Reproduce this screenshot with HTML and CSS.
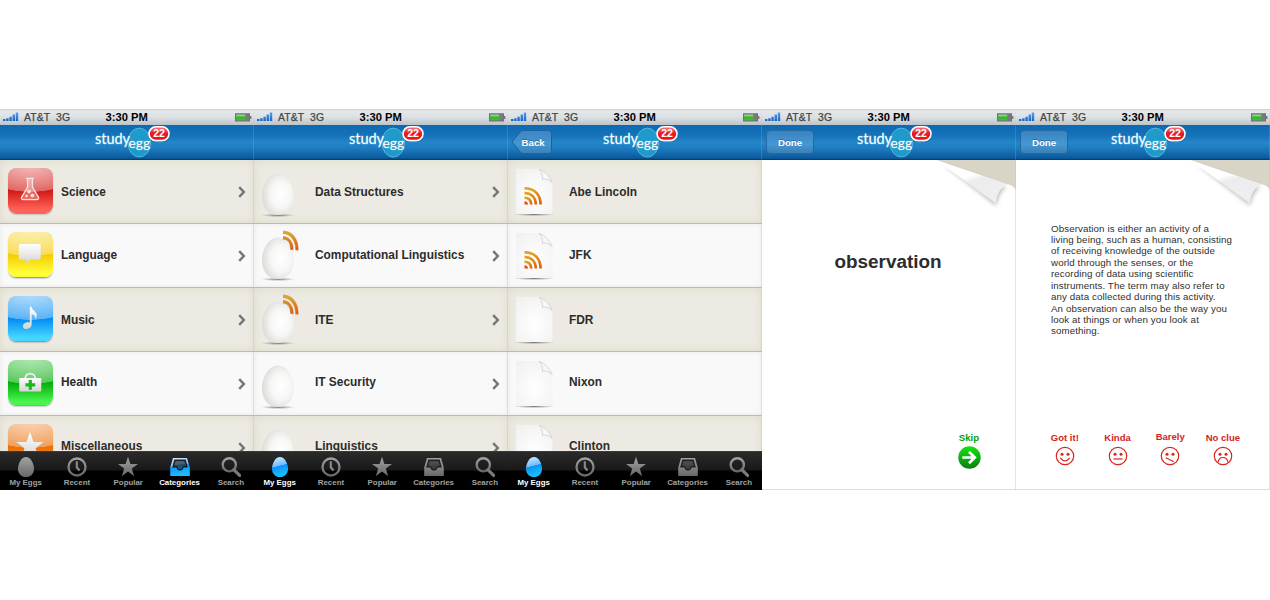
FILE: index.html
```html
<!DOCTYPE html>
<html lang="en">
<head>
<meta charset="utf-8">
<title>StudyEgg</title>
<link rel="stylesheet" href="styles.css">
</head>
<body>
<svg class="defs" width="80" height="34" aria-hidden="true">
  <defs>
    <linearGradient id="g-bar" x1="0" x2="0" y1="0" y2="1"><stop offset="0" stop-color="#58a0ee"/><stop offset="1" stop-color="#1463c8"/></linearGradient>
    <linearGradient id="g-batt" x1="0" x2="0" y1="0" y2="1"><stop offset="0" stop-color="#a5e59a"/><stop offset=".5" stop-color="#35b52b"/><stop offset="1" stop-color="#43c02f"/></linearGradient>
    <linearGradient id="g-badge" x1="0" x2="0" y1="0" y2="1"><stop offset="0" stop-color="#f4808a"/><stop offset=".5" stop-color="#e41826"/><stop offset="1" stop-color="#f0101c"/></linearGradient>
    <linearGradient id="g-gray" x1="0" x2="0" y1="0" y2="1"><stop offset="0" stop-color="#a2a2a2"/><stop offset="1" stop-color="#686868"/></linearGradient>
    <linearGradient id="g-blue" x1="0" x2=".2" y1="0" y2="1"><stop offset="0" stop-color="#d8efff"/><stop offset=".5" stop-color="#6dbcff"/><stop offset=".52" stop-color="#0d92f8"/><stop offset="1" stop-color="#16c0ff"/></linearGradient>
    <linearGradient id="g-white" x1="0" x2="0" y1="0" y2="1"><stop offset="0" stop-color="#fff"/><stop offset="1" stop-color="#d4d4d4"/></linearGradient>
    <linearGradient id="g-rss" x1="0" x2="0" y1="0" y2="1"><stop offset="0" stop-color="#e2a420"/><stop offset="1" stop-color="#e2560f"/></linearGradient>
    <radialGradient id="g-egg" cx=".6" cy=".5" r=".66"><stop offset="0" stop-color="#fff"/><stop offset=".5" stop-color="#f6f6f5"/><stop offset="1" stop-color="#d6d5d2"/></radialGradient>
    <radialGradient id="g-shadow"><stop offset="0" stop-color="#555" stop-opacity=".75"/><stop offset="1" stop-color="#777" stop-opacity="0"/></radialGradient>
    <radialGradient id="g-doc" cx=".5" cy=".6" r=".7"><stop offset="0" stop-color="#fff"/><stop offset="1" stop-color="#f1f1f1"/></radialGradient>
    <linearGradient id="g-flap" x1=".4" y1=".4" x2=".6" y2=".8"><stop offset="0" stop-color="#fff"/><stop offset=".3" stop-color="#ececee"/><stop offset="1" stop-color="#eeeeef"/></linearGradient>
    <linearGradient id="g-go" x1="0" x2="0" y1="0" y2="1"><stop offset="0" stop-color="#12e50e"/><stop offset="1" stop-color="#0a7d12"/></linearGradient>
    <linearGradient id="g-btn" x1="0" x2="0" y1="0" y2="1"><stop offset="0" stop-color="#3d86c2"/><stop offset=".6" stop-color="#4496d1"/><stop offset="1" stop-color="#3c7fb5"/></linearGradient>
    <filter id="blur2" x="-20%" y="-20%" width="140%" height="150%"><feGaussianBlur stdDeviation="2"/></filter>
  </defs>

  <symbol id="signal" viewBox="0 0 16 9"><path fill="url(#g-bar)" d="M0 7h2.4v2H0zM3.2 6.2h2.4V9H3.2zM6.4 4.8h2.4V9H6.4zM9.6 2.6H12V9H9.6zM12.8.5h2.4V9h-2.4z"/></symbol>
  <symbol id="battery" viewBox="0 0 17 9"><rect x=".5" y=".8" width="14" height="7.2" fill="#777b7e" stroke="#6d7276"/><rect x="1.2" y="1.6" width="9" height="5.7" fill="url(#g-batt)"/><path d="M15 3h1.4v3H15z" fill="#777"/></symbol>
  <symbol id="logo" viewBox="0 0 80 34">
    <ellipse cx="46.3" cy="17.600" rx="11.400" ry="14.500" fill="#1f9bcb" stroke="#62bfe2" stroke-width=".8"/>
    <text class="logo-text" x="2" y="19.400" font-size="15.500" textLength="35" lengthAdjust="spacingAndGlyphs">study</text>
    <text class="logo-text" x="35.600" y="23.400" font-size="14" textLength="21.500" lengthAdjust="spacingAndGlyphs">egg</text>
    <rect x="55.500" y="3" width="21" height="14" rx="7" fill="#06365f" opacity=".6"/>
    <rect x="56" y="1.800" width="20" height="13.800" rx="6.900" fill="url(#g-badge)" stroke="#fff" stroke-width="1.600"/>
    <text class="badge-text" x="66" y="12.400">22</text>
  </symbol>
  <symbol id="chevron" viewBox="0 0 8 12"><path d="M1.2 1.2 5.8 6l-4.600 4.800" fill="none" stroke="#767676" stroke-width="2.500"/></symbol>

  <symbol id="t-egg" viewBox="0 0 20 22"><path d="M10 1c4.600 0 8 6.500 8 11.700 0 5-3.300 8.300-8 8.300s-8-3.300-8-8.300C2 7.500 5.400 1 10 1z"/></symbol>
  <symbol id="t-recent" viewBox="0 0 20 22"><circle cx="10" cy="11" r="8.500" fill="none" stroke="url(#g-gray)" stroke-width="2.300"/><path d="M9.800 5.300v6l2.700 3.200" fill="none" stroke="#8c8c8c" stroke-width="2.100"/></symbol>
  <symbol id="t-star" viewBox="0 0 20 22"><path d="m10 .8 2.400 7.300H20l-6.200 4.500 2.400 7.600L10 15.600l-6.200 4.600 2.400-7.600L0 8.100h7.600z"/></symbol>
  <symbol id="t-box" viewBox="0 0 20 22"><path fill-rule="evenodd" d="M3 2h14l2.800 9.500V20H.2v-8.500zm1.300 1.600L2.200 11.500h4.300c.3 2 1.500 3 3.500 3s3.200-1 3.500-3h4.300l-2.100-7.900z"/><path d="M5.500 5.200h9L16 10h-3l-1.300 3H8.300L7 10H4z" opacity=".38"/></symbol>
  <symbol id="t-search" viewBox="0 0 20 22"><circle cx="8.300" cy="8.800" r="6.600" fill="none" stroke="url(#g-gray)" stroke-width="2.400"/><path d="m13 13.800 5.600 5.600" stroke="#7b7b7b" stroke-width="3.200" stroke-linecap="round"/></symbol>

  <symbol id="i-flask" viewBox="0 0 46 46"><path d="M18.500 10.500h8M20 11v8.500l-6 10.200c-.8 1.500 0 2.600 1.500 2.600h14c1.500 0 2.300-1.100 1.500-2.600l-6-10.200V11" fill="#fff" fill-opacity=".28" stroke="#f4e4e4" stroke-width="1.300"/><circle cx="21.500" cy="24" r="2" fill="#f7dcdc"/><circle cx="25" cy="28" r="2" fill="#f7dcdc"/><circle cx="19" cy="28.500" r="1.300" fill="#f7dcdc"/></symbol>
  <symbol id="i-bubble" viewBox="0 0 46 46"><path fill="url(#g-white)" d="M13 12.300h18.500q2 0 2 2V26q0 2-2 2H23l-4.500 4.200V28H13q-2 0-2-2V14.300q0-2 2-2z"/></symbol>
  <symbol id="i-note" viewBox="0 0 46 46"><path fill="url(#g-white)" d="M22.300 11h1.700c.4 3.200 5.300 5 5.400 8.700 0 1.700-.6 3-1.500 4.200.5-3-1-5-3.700-5.300V29c0 3-2.500 4.800-5.300 4.800-2.200 0-3.600-1.200-3.600-3 0-2.500 3-4.500 7-3.800z"/></symbol>
  <symbol id="i-kit" viewBox="0 0 46 46"><path d="M17.500 19.500c0-7.500 10.500-7.500 10.500 0" fill="none" stroke="#f2f2f2" stroke-width="1.800"/><rect x="11.500" y="18.300" width="22.500" height="14" rx="1" fill="url(#g-white)"/><path fill="#16b81c" d="M21.200 20.500h3.200v3.300h3.400V27h-3.400v3.300h-3.200V27h-3.400v-3.200h3.400z"/></symbol>
  <symbol id="i-star" viewBox="0 0 46 46"><path fill="url(#g-white)" d="m22.500 8 3.600 10.500h10.400l-8.300 6.200 3.300 10.200-9-6.200-9 6.200 3.300-10.200L8.500 18.500h10.400z"/></symbol>

  <symbol id="egg" viewBox="0 0 46 52"><ellipse cx="20" cy="47.300" rx="17" ry="1.800" fill="url(#g-shadow)"/><path fill="url(#g-egg)" d="M19.800 5.500C29.500 5.500 35.700 18 35.700 28c0 12-6.700 19-15.900 19S4 40 4 28C4 18 10.100 5.500 19.800 5.500z"/></symbol>
  <symbol id="waves" viewBox="0 0 20 22"><path d="M2 2.300C10.500 2.600 16 9.500 16 20.300M2 7.800c5.500.3 9 5 9 12" fill="none" stroke="#9a6a30" stroke-opacity=".5" stroke-width="3.400"/><path d="M2 2.300C10.500 2.600 16 9.500 16 20.300M2 7.800c5.500.3 9 5 9 12" fill="none" stroke="url(#g-rss)" stroke-width="2.500"/></symbol>
  <symbol id="doc" viewBox="0 0 44 52"><ellipse cx="21" cy="47.500" rx="21" ry="1.600" fill="url(#g-shadow)"/><path fill="url(#g-doc)" d="M3 2h22q8 1 14.500 14v31H3z"/><path fill="#f7f7f7" stroke="#c9c9c9" stroke-width=".7" d="M26 2.500c3 2 3.500 5 3.500 10 4-1 7 0 9.600 3C36 8.500 32 4 26 2.500z"/></symbol>
  <symbol id="rss" viewBox="0 0 20 20"><g fill="none" stroke="url(#g-rss)" stroke-width="2.600"><path d="M1.500 2.200C11.500 2.200 17.600 8.500 17.600 18.600"/><path d="M1.500 7c7 0 11.300 4.300 11.300 11.600"/><path d="M1.500 11.700c4.200 0 6.700 2.500 6.700 6.900"/></g><path d="M1.500 15.200q3.400.2 3.600 3.400H1.500z" fill="#dc520e"/></symbol>

  <symbol id="curl" viewBox="0 0 86 56">
    <path fill="#d9d5c6" d="M6 0H86V30q-3-5-8-5.500z"/>
    <path fill="#777" opacity=".5" filter="url(#blur2)" d="M14 5 66 45.500q2-12 10-18.500L60 22z"/>
    <path fill="url(#g-flap)" d="M6 0 78 24.500Q67.500 28 65.700 43.300z"/>
  </symbol>
  <symbol id="go" viewBox="0 0 23 23"><circle cx="11.500" cy="11.500" r="11.200" fill="url(#g-go)"/><path d="M4.300 11.500h12M11 5.700l5.800 5.800-5.800 5.800" fill="none" stroke="#fff" stroke-width="2.700"/></symbol>
  <symbol id="face" viewBox="0 0 20 20"><circle cx="10" cy="10" r="8.700" fill="none" stroke="#d8251d" stroke-width="1.200"/><circle cx="7" cy="8.300" r="1.500" fill="#d8251d"/><circle cx="13" cy="8.300" r="1.500" fill="#d8251d"/></symbol>
</svg>

<main class="board">
  <section class="phone">
    <div class="status"><svg class="signal"><use href="#signal"/></svg><span class="carrier">AT&amp;T</span><span class="network">3G</span><b class="time">3:30 PM</b><svg class="battery"><use href="#battery"/></svg></div>
    <header class="nav"><svg class="logo"><use href="#logo"/></svg></header>
    <ul class="list">
      <li class="row"><span class="tile red"><svg><use href="#i-flask"/></svg></span><span class="label">Science</span><svg class="chevron"><use href="#chevron"/></svg></li>
      <li class="row"><span class="tile yellow"><svg><use href="#i-bubble"/></svg></span><span class="label">Language</span><svg class="chevron"><use href="#chevron"/></svg></li>
      <li class="row"><span class="tile blue"><svg><use href="#i-note"/></svg></span><span class="label">Music</span><svg class="chevron"><use href="#chevron"/></svg></li>
      <li class="row"><span class="tile green"><svg><use href="#i-kit"/></svg></span><span class="label">Health</span><svg class="chevron"><use href="#chevron"/></svg></li>
      <li class="row"><span class="tile orange"><svg><use href="#i-star"/></svg></span><span class="label">Miscellaneous</span><svg class="chevron"><use href="#chevron"/></svg></li>
    </ul>
    <nav class="tabs">
      <a class="tab"><svg><use href="#t-egg"/></svg>My Eggs</a>
      <a class="tab"><svg><use href="#t-recent"/></svg>Recent</a>
      <a class="tab"><svg><use href="#t-star"/></svg>Popular</a>
      <a class="tab active"><svg><use href="#t-box"/></svg>Categories</a>
      <a class="tab"><svg><use href="#t-search"/></svg>Search</a>
    </nav>
  </section>

  <section class="phone">
    <div class="status"><svg class="signal"><use href="#signal"/></svg><span class="carrier">AT&amp;T</span><span class="network">3G</span><b class="time">3:30 PM</b><svg class="battery"><use href="#battery"/></svg></div>
    <header class="nav"><svg class="logo"><use href="#logo"/></svg></header>
    <ul class="list">
      <li class="row"><span class="pic"><svg class="egg"><use href="#egg"/></svg></span><span class="label">Data Structures</span><svg class="chevron"><use href="#chevron"/></svg></li>
      <li class="row"><span class="pic"><svg class="egg"><use href="#egg"/></svg><svg class="waves"><use href="#waves"/></svg></span><span class="label">Computational Linguistics</span><svg class="chevron"><use href="#chevron"/></svg></li>
      <li class="row"><span class="pic"><svg class="egg"><use href="#egg"/></svg><svg class="waves"><use href="#waves"/></svg></span><span class="label">ITE</span><svg class="chevron"><use href="#chevron"/></svg></li>
      <li class="row"><span class="pic"><svg class="egg"><use href="#egg"/></svg></span><span class="label">IT Security</span><svg class="chevron"><use href="#chevron"/></svg></li>
      <li class="row"><span class="pic"><svg class="egg"><use href="#egg"/></svg></span><span class="label">Linguistics</span><svg class="chevron"><use href="#chevron"/></svg></li>
    </ul>
    <nav class="tabs">
      <a class="tab active"><svg><use href="#t-egg"/></svg>My Eggs</a>
      <a class="tab"><svg><use href="#t-recent"/></svg>Recent</a>
      <a class="tab"><svg><use href="#t-star"/></svg>Popular</a>
      <a class="tab"><svg><use href="#t-box"/></svg>Categories</a>
      <a class="tab"><svg><use href="#t-search"/></svg>Search</a>
    </nav>
  </section>

  <section class="phone">
    <div class="status"><svg class="signal"><use href="#signal"/></svg><span class="carrier">AT&amp;T</span><span class="network">3G</span><b class="time">3:30 PM</b><svg class="battery"><use href="#battery"/></svg></div>
    <header class="nav">
      <a class="back"><svg viewBox="0 0 42 26"><path d="M1 13 9 3.200Q10.200 1.500 12 1.500H37.500Q40.500 1.500 40.500 4.500V21.500Q40.500 24.500 37.500 24.500H12Q10.200 24.500 9 22.800z" fill="url(#g-btn)" stroke="#1c62a0"/></svg><span>Back</span></a>
      <svg class="logo"><use href="#logo"/></svg>
    </header>
    <ul class="list">
      <li class="row"><span class="pic"><svg class="doc"><use href="#doc"/></svg><svg class="rss"><use href="#rss"/></svg></span><span class="label">Abe Lincoln</span></li>
      <li class="row"><span class="pic"><svg class="doc"><use href="#doc"/></svg><svg class="rss"><use href="#rss"/></svg></span><span class="label">JFK</span></li>
      <li class="row"><span class="pic"><svg class="doc"><use href="#doc"/></svg></span><span class="label">FDR</span></li>
      <li class="row"><span class="pic"><svg class="doc"><use href="#doc"/></svg></span><span class="label">Nixon</span></li>
      <li class="row"><span class="pic"><svg class="doc"><use href="#doc"/></svg></span><span class="label">Clinton</span></li>
    </ul>
    <nav class="tabs">
      <a class="tab active"><svg><use href="#t-egg"/></svg>My Eggs</a>
      <a class="tab"><svg><use href="#t-recent"/></svg>Recent</a>
      <a class="tab"><svg><use href="#t-star"/></svg>Popular</a>
      <a class="tab"><svg><use href="#t-box"/></svg>Categories</a>
      <a class="tab"><svg><use href="#t-search"/></svg>Search</a>
    </nav>
  </section>

  <section class="phone card">
    <div class="status"><svg class="signal"><use href="#signal"/></svg><span class="carrier">AT&amp;T</span><span class="network">3G</span><b class="time">3:30 PM</b><svg class="battery"><use href="#battery"/></svg></div>
    <header class="nav"><a class="done">Done</a><svg class="logo"><use href="#logo"/></svg></header>
    <div class="paper">
      <svg class="curl"><use href="#curl"/></svg>
      <h1 class="term">observation</h1>
      <a class="skip">Skip<svg><use href="#go"/></svg></a>
    </div>
  </section>

  <section class="phone card">
    <div class="status"><svg class="signal"><use href="#signal"/></svg><span class="carrier">AT&amp;T</span><span class="network">3G</span><b class="time">3:30 PM</b><svg class="battery"><use href="#battery"/></svg></div>
    <header class="nav"><a class="done">Done</a><svg class="logo"><use href="#logo"/></svg></header>
    <div class="paper">
      <svg class="curl"><use href="#curl"/></svg>
      <p class="definition">Observation is either an activity of a<br>living being, such as a human, consisting<br>of receiving knowledge of the outside<br>world through the senses, or the<br>recording of data using scientific<br>instruments. The term may also refer to<br>any data collected during this activity.<br>An observation can also be the way you<br>look at things or when you look at<br>something.</p>
      <div class="ratings">
        <a class="rating">Got it!<svg viewBox="0 0 20 20"><use href="#face"/><path d="M5.300 11.800q4.700 6 9.400 0"/></svg></a>
        <a class="rating">Kinda<svg viewBox="0 0 20 20"><use href="#face"/><path d="M5.500 13h9"/></svg></a>
        <a class="rating raised">Barely<svg viewBox="0 0 20 20"><use href="#face"/><path d="m5.800 11.800 8 4"/></svg></a>
        <a class="rating">No clue<svg viewBox="0 0 20 20"><use href="#face"/><path d="M5 16.300c1.200-6.400 8.800-6.400 10 0"/></svg></a>
      </div>
    </div>
  </section>
</main>
</body>
</html>
```
FILE: styles.css
```css
* { box-sizing: border-box; }
body { margin: 0; height: 600px; overflow: hidden; background: #fff; color: #2b2b2b; font-family: "Liberation Sans", Arial, sans-serif; }
.defs { position: absolute; }
svg { display: block; flex: none; }

.board { display: grid; grid-template-columns: repeat(5, 254px); padding-top: 109px; }
.phone { position: relative; display: flex; flex-direction: column; height: 381px; overflow: hidden; background: #fff; }
.phone::after { content: ""; position: absolute; inset: 0 0 39px auto; width: 1px; background: linear-gradient(rgba(190, 190, 215, .2) 51px, rgba(190, 190, 215, .42) 51px); }
.card::after { bottom: 0; }

.status { display: flex; align-items: center; height: 16px; padding-left: 3px; background: linear-gradient(#c6ced2, #e4e8eb 12%, #dce1e4 50%, #bcc4c9); font-size: 10.400px; letter-spacing: .1px; color: #454545; -webkit-text-stroke: .25px #454545; }
.signal { width: 16px; height: 9px; margin-top: -1px; }
.carrier { width: 27px; margin-left: 5px; }
.network { width: 18px; margin-left: 5px; }
.time { margin-left: 31.500px; width: 44px; margin-top: -1px; font-size: 11.200px; letter-spacing: 0; color: #000; white-space: nowrap; -webkit-text-stroke: 0; }
.battery { width: 17px; height: 9px; margin-left: auto; margin-right: 2px; }

.nav { position: relative; display: flex; height: 35px; background: linear-gradient(#0d69b1, #1672b9 30%, #2486c9 50%, #1e7dc1 65%, #0a5a9d 95%, #063f70 98%); }
.logo { position: absolute; left: 93px; top: 0; width: 80px; height: 34px; }
.logo-text { font-family: Lato, sans-serif; fill: #fff; stroke: #46a9d8; stroke-width: 1px; paint-order: stroke; }
.badge-text { font: bold 10.500px "Liberation Sans", sans-serif; fill: #fff; text-anchor: middle; }
.done, .back { font-size: 9.700px; font-weight: bold; color: #fff; text-shadow: 0 -1px 0 rgba(0, 40, 90, .35); }
.done { display: flex; align-items: center; justify-content: center; width: 48px; height: 24px; margin: 5px 0 0 4px; border: 1px solid #2568a2; border-radius: 4px; background: linear-gradient(#3983c0, #4698d4 60%, #3b7eb3); }
.back { display: grid; width: 42px; height: 26px; margin: 4px 0 0 3px; }
.back > * { grid-area: 1 / 1; }
.back span { align-self: center; padding-left: 10.500px; }

.list { flex: 1; min-height: 0; margin: 0; padding: 0; overflow: hidden; list-style: none; }
.row { display: flex; align-items: center; height: 64px; padding: 0 7px; border-bottom: 1px solid #bdbab0; background: #f9f9f9; box-shadow: inset 0 0 5px rgba(220, 220, 215, .5); }
.row:nth-child(odd) { background: #eceae2; box-shadow: inset 0 0 9px #ddd8c8; }
.label { flex: 1; font-size: 11.900px; font-weight: bold; color: #2c2c2c; white-space: nowrap; }
.row:nth-child(2) .label { margin-top: -2px; }
.row:nth-child(4) .label, .row:nth-child(5) .label { margin-top: -4px; }
.chevron { width: 8px; height: 12px; margin-right: 1px; }

.tile { width: 45px; height: 45px; margin: -2px 8px 0 1px; border-radius: 8px; overflow: hidden; box-shadow: 0 2px 2px -1px rgba(0, 0, 0, .5); background: radial-gradient(ellipse 50px 24px at 50% 0, rgba(255, 255, 255, .5), rgba(255, 255, 255, .32) 98%, transparent), radial-gradient(ellipse 60px 32px at 50% -8px, rgba(255, 255, 255, .45), transparent), linear-gradient(var(--deep) 52%, var(--base) 92%); }
.tile svg { width: 45px; height: 45px; }
.red { --deep: #d31d18; --base: #ff6159; }
.yellow { --deep: #f5cd08; --base: #ffff38; }
.blue { --deep: #078ef4; --base: #45d6ff; }
.green { --deep: #07af0c; --base: #48f44e; }
.orange { --deep: #ea7009; --base: #ffa03b; }

.pic { position: relative; width: 54px; height: 52px; }
.egg { width: 46px; height: 52px; margin: 2px 0 0 -3px; }
.waves { position: absolute; left: 20px; top: 0; width: 20px; height: 22px; }
.doc { width: 44px; height: 52px; margin: 1px 0 0 -2px; }
.rss { position: absolute; left: 8px; top: 20px; width: 20px; height: 20px; }

.tabs { display: grid; grid-template-columns: repeat(5, 51.300px); height: 39px; background: linear-gradient(#4a4a4a 0, #2a2a2a 1px, #191919 19px, #000 20px); }
.tab { display: flex; flex-direction: column; align-items: center; padding-top: 5px; font-size: 7.900px; line-height: 10px; font-weight: bold; color: #a0a0a0; white-space: nowrap; fill: url(#g-gray); }
.tab svg { width: 20px; height: 22px; }
.tab.active { color: #fff; fill: url(#g-blue); }

.card::before { content: ""; position: absolute; inset: auto 0 0 0; height: 1px; background: #ddd; }
.paper { position: relative; flex: 1; display: flex; flex-direction: column; }
.curl { position: absolute; right: 0; top: 0; width: 86px; height: 56px; }
.term { margin: 91px 0 0; padding-right: 2px; font-size: 18.900px; line-height: 22px; text-align: center; color: #2d2d2d; }
.skip { display: flex; flex-direction: column; align-items: center; gap: 3px; width: 30px; margin: 159px 0 0 192px; font-size: 9.600px; line-height: 11px; font-weight: bold; color: #079c0b; }
.skip svg { width: 23px; height: 23px; }
.definition { margin: 62.500px 0 0 35px; font-size: 9.750px; letter-spacing: .095px; line-height: 11.440px; color: #303030; white-space: nowrap; }
.ratings { display: grid; grid-template-columns: repeat(4, 52.700px); margin: 95px 0 0 22.500px; }
.rating { display: flex; flex-direction: column; align-items: center; gap: 3px; font-size: 9.500px; line-height: 11px; font-weight: bold; color: #d3241c; white-space: nowrap; }
.rating svg { width: 20px; height: 20px; }
.rating path { fill: none; stroke: #d8251d; stroke-width: 1.200; }
.raised { margin-top: -1px; gap: 4px; }
```
